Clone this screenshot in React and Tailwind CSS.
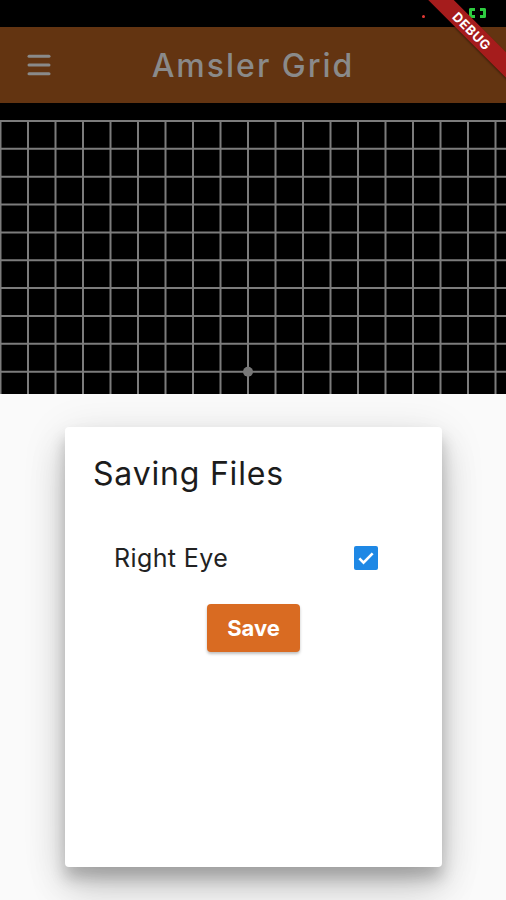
import { Menu } from 'lucide-react'

const COLS = Array.from({ length: 20 }, (_, i) => 248 + (i - 9) * 27.5)
const ROWS = Array.from({ length: 10 }, (_, i) => 268.7 - (9 - i) * 27.86)

function AmslerGrid() {
  return (
    <svg width="506" height="291" viewBox="0 0 506 291" className="block">
      <rect width="506" height="291" fill="#000" />
      {COLS.map((x) => (
        <line key={`v${x}`} x1={x} y1={ROWS[0] - 1} x2={x} y2={291} stroke="#7c7c7c" strokeWidth="2" />
      ))}
      {ROWS.map((y) => (
        <line key={`h${y}`} x1={0} y1={y} x2={506} y2={y} stroke="#7c7c7c" strokeWidth="2" />
      ))}
      <circle cx="248" cy="268.7" r="5" fill="#777" />
    </svg>
  )
}

export default function App() {
  return (
    <div
      className="relative w-[506px] h-[900px] overflow-hidden bg-[#fafafa]"
      style={{ fontFamily: 'Inter, Roboto, "Noto Sans", sans-serif' }}
    >
      {/* status bar */}
      <div className="h-[27px] bg-black flex items-center justify-end pr-[20px] gap-[44px] pt-[6px]">
        <span className="w-[3px] h-[3px] rounded-full bg-[#e53935]" />
        <span className="flex gap-[5px] -mt-[8px]">
          <span className="w-[6px] h-[10px] border-[3px] border-r-0 border-[#2ecc40] rounded-l-[2px]" />
          <span className="w-[6px] h-[10px] border-[3px] border-l-0 border-[#2ecc40] rounded-r-[2px]" />
        </span>
      </div>

      {/* app bar */}
      <header className="h-[76px] bg-[#633411] flex items-center px-[24px] shadow-[0_2px_4px_rgba(0,0,0,0.3)] relative z-10">
        <Menu className="w-[30px] h-[30px] text-[#8a8a8a]" strokeWidth={2.4} />
        <h1 className="flex-1 text-center pr-[30px] text-[32px] tracking-[2px] font-medium text-[#8a8a8a] pt-[2px]">
          Amsler Grid
        </h1>
      </header>

      <AmslerGrid />

      {/* card */}
      <div className="pt-[33px] pl-[65px]">
        <div className="w-[377px] h-[440px] bg-white rounded-[4px] shadow-[0_24px_38px_rgba(0,0,0,0.14),0_9px_46px_rgba(0,0,0,0.12),0_11px_15px_rgba(0,0,0,0.2)] pt-[28px] px-[28px]">
          <h2 className="text-[32px] leading-[38px] tracking-[0.8px] text-[#1c1c1c]">Saving Files</h2>
          <div className="mt-[50px] flex items-center justify-between pl-[21px] pr-[36px]">
            <span className="text-[25px] leading-[30px] tracking-[0.4px] text-[#222]">Right Eye</span>
            <span className="w-[24px] h-[24px] rounded-[2px] bg-[#1e88e5] flex items-center justify-center">
              <svg width="20" height="20" viewBox="0 0 24 24" fill="none">
                <path d="M4 12.5l5 5L20 6.5" stroke="#fff" strokeWidth="3.2" />
              </svg>
            </span>
          </div>
          <div className="mt-[31px] flex justify-center">
            <button className="w-[93px] h-[48px] rounded-[4px] bg-[#d96b22] text-white text-[22px] font-bold shadow-[0_2px_3px_rgba(0,0,0,0.25)]">
              Save
            </button>
          </div>
        </div>
      </div>

      {/* debug banner */}
      <div className="absolute z-20 left-[392px] top-[22px] w-[160px] h-[18px] bg-[#a51c1c] rotate-45 flex items-center justify-center shadow-[0_1px_2px_rgba(0,0,0,0.4)]">
        <span className="text-white text-[13px] font-bold tracking-[0.5px] leading-none">DEBUG</span>
      </div>
    </div>
  )
}
